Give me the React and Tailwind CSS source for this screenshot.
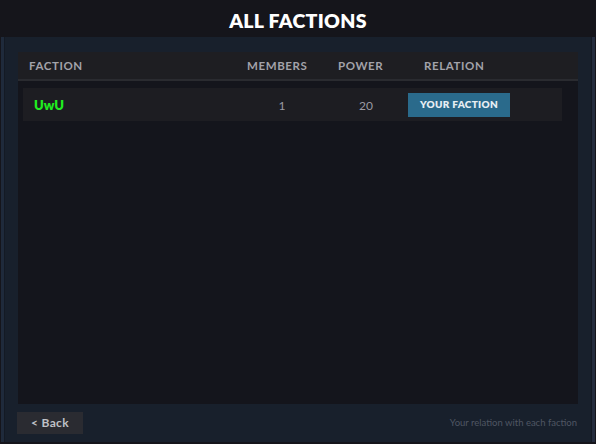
import React from 'react';

const factions = [{ name: 'UwU', members: 1, power: 20, relation: 'YOUR FACTION' }];

const App = () => {
  return (
    <div className="w-[596px] h-[444px] bg-[#15151b] flex flex-col overflow-hidden" style={{ fontFamily: 'Lato, "Open Sans", sans-serif' }}>
      <div className="h-[37px] flex items-center justify-center">
        <h1 className="text-[19.5px] font-extrabold text-white tracking-[0.3px] mt-[4px]">ALL FACTIONS</h1>
      </div>

      <div className="flex-1 flex pl-[1px] pr-[1px] pb-[2px]">
        <div className="w-[3px] bg-[#1f2a3b]" />
        <div className="w-[1px] bg-[#141a24]" />
        <div className="flex-1 bg-[#18202c] flex flex-col px-[13px] pt-[15px] pb-[8px]">
          <div className="flex-1 bg-[#14151c] flex flex-col">
            <div className="h-[29px] bg-[#1e1e22] flex items-center pl-[11px] text-[11.5px] font-bold text-[#a3a3aa] tracking-[0.6px] border-b-[2px] border-[#2a2b30]">
              <div className="w-[218px]">FACTION</div>
              <div className="w-[91px]">MEMBERS</div>
              <div className="w-[86px]">POWER</div>
              <div>RELATION</div>
            </div>
            <div className="pl-[5px] pr-[16px] pt-[7px]">
              {factions.map((f) => (
                <div key={f.name} className="h-[33px] bg-[#1d1d22] flex items-center pl-[11px]">
                  <div className="w-[203px] pt-[2px] text-[13px] font-extrabold text-[#20ec20]">{f.name}</div>
                  <div className="w-[90px] pt-[2px] text-center text-[12px] text-[#9a9aa2]">{f.members}</div>
                  <div className="w-[78px] pt-[2px] text-center text-[12px] text-[#9a9aa2]">{f.power}</div>
                  <div className="pl-[3px]">
                    <div className="w-[102px] h-[24px] bg-[#2a6a8b] flex items-center justify-center text-[10px] font-extrabold text-[#e6eef3] tracking-[0.3px]">
                      {f.relation}
                    </div>
                  </div>
                </div>
              ))}
            </div>
          </div>
          <div className="flex items-center justify-between mt-[8px]">
            <button className="-ml-[1px] w-[66px] h-[22px] bg-[#2a2b31] text-[12px] font-bold text-[#bfc0c6] flex items-center justify-center tracking-[0.3px]">
              &lt; Back
            </button>
            <span className="text-[9.5px] text-[#4f5663] mr-[1px]">Your relation with each faction</span>
          </div>
        </div>
        <div className="w-[1px] bg-[#141a24]" />
        <div className="w-[3px] bg-[#242c3e]" />
      </div>
    </div>
  );
};

export default App;
